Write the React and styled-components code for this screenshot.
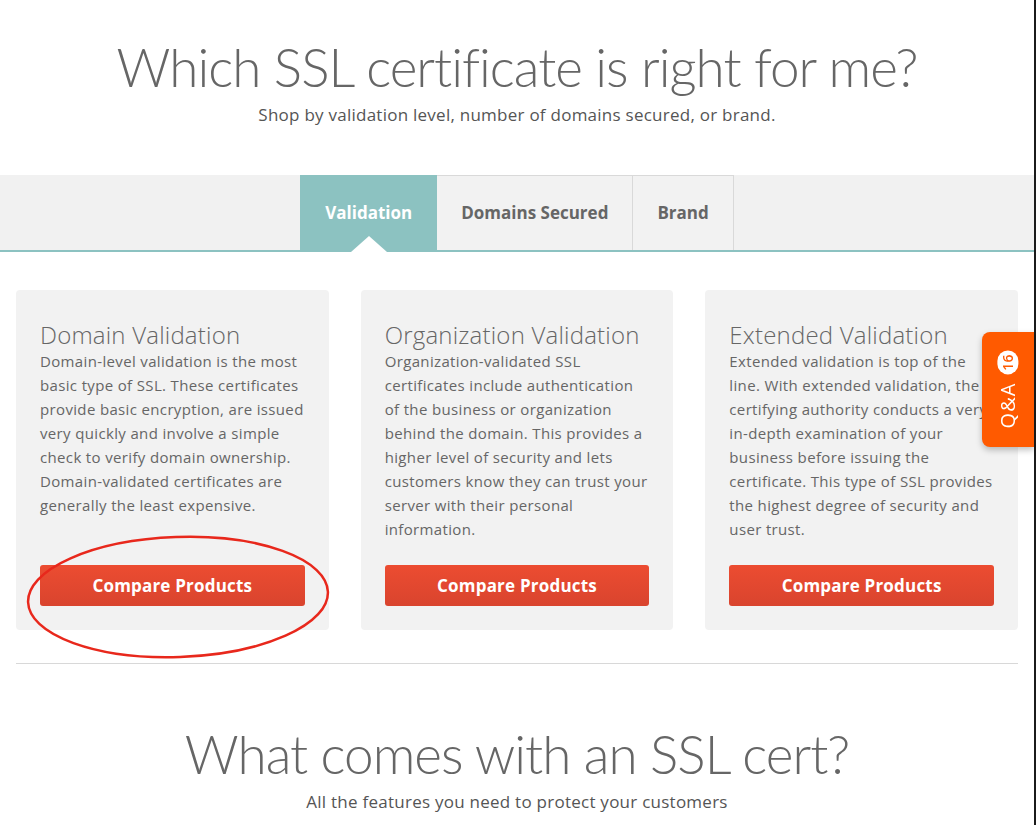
import React from "react";
import styled, { createGlobalStyle } from "styled-components";

const GlobalStyle = createGlobalStyle`
  html, body {
    margin: 0;
    padding: 0;
    background: #fff;
  }
  body {
    font-family: "Open Sans", "Liberation Sans", sans-serif;
    color: #666;
  }
`;

const Page = styled.div`
  min-height: 100vh;
  border-right: 2px solid #1b1b1b;
  overflow: hidden;
`;

const Heading = styled.h1`
  margin: ${(p) => (p.$top ? "35px" : "58px")} 0 0;
  font-family: Lato, "Open Sans", sans-serif;
  font-size: 53px;
  line-height: 64px;
  font-weight: 300;
  letter-spacing: -1px;
  color: #666;
  text-align: center;
`;

const Lead = styled.p`
  margin: 4px 0 0;
  font-size: 17px;
  line-height: 24px;
  letter-spacing: 0.25px;
  color: #555;
  text-align: center;
`;

const TabBar = styled.div`
  margin-top: 48px;
  height: 75px;
  background: #f1f1f1;
  border-bottom: 2px solid #8cc2c1;
  display: flex;
  justify-content: center;
`;

const Tab = styled.div`
  position: relative;
  display: flex;
  align-items: center;
  padding: 0 24px 2px;
  font-size: 17px;
  font-weight: 700;
  color: ${(p) => (p.$active ? "#fff" : "#666")};
  background: ${(p) => (p.$active ? "#8cc2c1" : "#f2f2f2")};
  border: 1px solid ${(p) => (p.$active ? "#8cc2c1" : "#d9d9d9")};
  border-bottom: none;
  border-left-width: ${(p) => (p.$first ? "1px" : "0")};

  &::after {
    content: "";
    display: ${(p) => (p.$active ? "block" : "none")};
    position: absolute;
    left: 50%;
    bottom: -2px;
    margin-left: -18px;
    border-left: 18px solid transparent;
    border-right: 18px solid transparent;
    border-bottom: 16px solid #fff;
  }
`;

const Container = styled.div`
  max-width: 1002px;
  margin: 0 auto;
`;

const Cards = styled.div`
  margin-top: 38px;
  display: grid;
  grid-template-columns: repeat(3, 1fr);
  gap: 32px;
`;

const Card = styled.div`
  position: relative;
  display: flex;
  flex-direction: column;
  background: #f2f2f2;
  border-radius: 4px;
  padding: 31px 24px 24px;
`;

const CardTitle = styled.h3`
  margin: 0;
  font-size: 24px;
  line-height: 28px;
  font-weight: 300;
  letter-spacing: 0.2px;
  color: #666;
`;

const CardText = styled.p`
  flex: 1;
  margin: 0;
  font-size: 15px;
  line-height: 24px;
  letter-spacing: 0.35px;
  color: #666;
`;

const Button = styled.button`
  margin-top: 24px;
  height: 41px;
  border: none;
  border-radius: 3px;
  background: linear-gradient(#ec4c31, #d9442e);
  color: #fff;
  font-family: "Open Sans", "Liberation Sans", sans-serif;
  font-size: 17px;
  font-weight: 700;
  letter-spacing: 0.2px;
  cursor: pointer;
`;

const Ring = styled.svg`
  position: absolute;
  left: 4px;
  top: 237px;
  pointer-events: none;
  overflow: visible;
`;

const Rule = styled.hr`
  margin: 33px 0 0;
  border: none;
  border-top: 1px solid #d8d8d8;
`;

const QaTab = styled.div`
  position: fixed;
  right: 2px;
  top: 332px;
  width: 52px;
  height: 115px;
  background: #ff5a00;
  border-radius: 8px 0 0 8px;
  box-shadow: 0 3px 6px rgba(0, 0, 0, 0.25);
  display: flex;
  align-items: center;
  justify-content: center;
`;

const QaInner = styled.div`
  transform: rotate(-90deg);
  display: flex;
  align-items: center;
  gap: 8px;
  white-space: nowrap;
  color: #fff;
  font-size: 20px;
  letter-spacing: 1px;
`;

const Badge = styled.span`
  display: inline-flex;
  align-items: center;
  justify-content: center;
  width: 24px;
  height: 21px;
  border-radius: 11px;
  background: #fff;
  color: #ff5a00;
  font-size: 14px;
  font-weight: 600;
  letter-spacing: 0;
`;

const cards = [
  {
    title: "Domain Validation",
    text: "Domain-level validation is the most basic type of SSL. These certificates provide basic encryption, are issued very quickly and involve a simple check to verify domain ownership. Domain-validated certificates are generally the least expensive.",
    circled: true,
  },
  {
    title: "Organization Validation",
    text: "Organization-validated SSL certificates include authentication of the business or organization behind the domain. This provides a higher level of security and lets customers know they can trust your server with their personal information.",
  },
  {
    title: "Extended Validation",
    text: "Extended validation is top of the line. With extended validation, the certifying authority conducts a very in-depth examination of your business before issuing the certificate. This type of SSL provides the highest degree of security and user trust.",
  },
];

const App = () => {
  return (
    <Page>
      <GlobalStyle />
      <Heading $top>Which SSL certificate is right for me?</Heading>
      <Lead>Shop by validation level, number of domains secured, or brand.</Lead>

      <TabBar>
        <Tab $active $first>Validation</Tab>
        <Tab>Domains Secured</Tab>
        <Tab>Brand</Tab>
      </TabBar>

      <Container>
        <Cards>
          {cards.map((card) => (
            <Card key={card.title}>
              <CardTitle>{card.title}</CardTitle>
              <CardText>{card.text}</CardText>
              <Button>Compare Products</Button>
              {card.circled && (
                <Ring width="320" height="140" viewBox="0 0 320 140">
                  <ellipse
                    cx="158"
                    cy="70"
                    rx="150"
                    ry="60"
                    transform="rotate(-2 158 70)"
                    fill="none"
                    stroke="#e8281c"
                    strokeWidth="2.5"
                  />
                </Ring>
              )}
            </Card>
          ))}
        </Cards>
        <Rule />
      </Container>

      <Heading>What comes with an SSL cert?</Heading>
      <Lead>All the features you need to protect your customers</Lead>

      <QaTab>
        <QaInner>
          Q&amp;A <Badge>16</Badge>
        </QaInner>
      </QaTab>
    </Page>
  );
};

export default App;
